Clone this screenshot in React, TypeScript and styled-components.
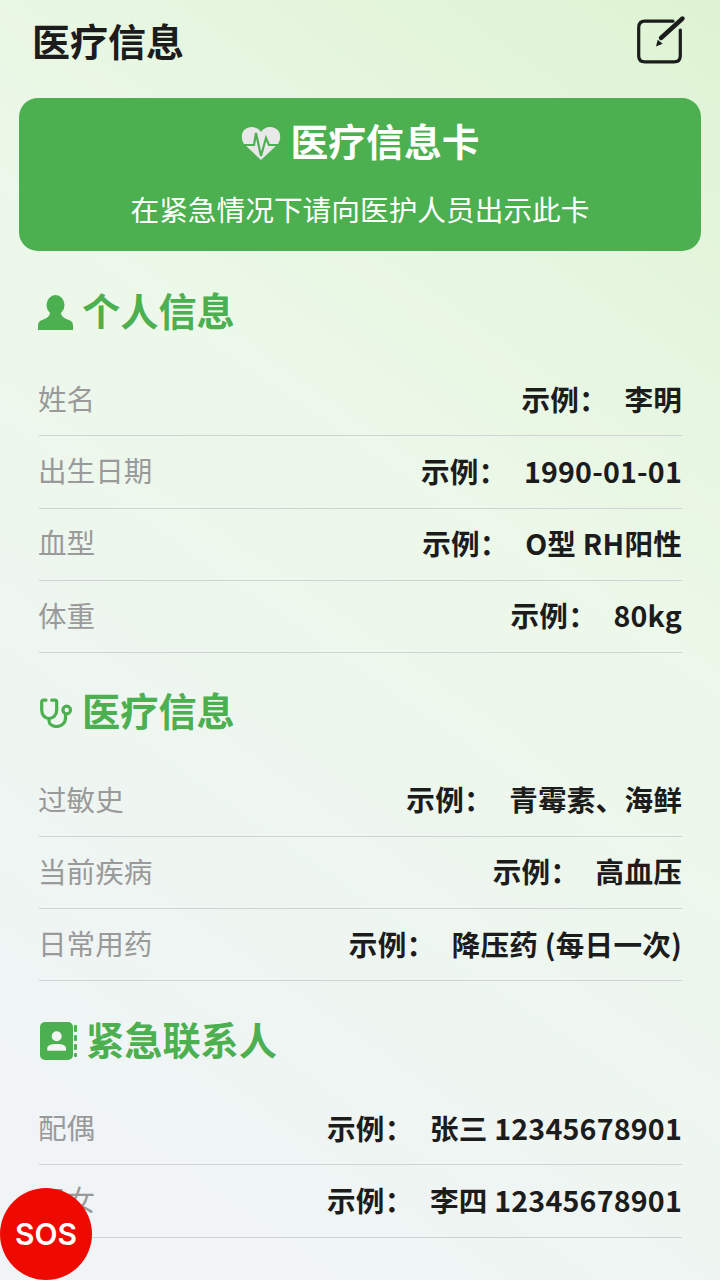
import styled, { createGlobalStyle } from "styled-components";

const GlobalStyle = createGlobalStyle`
  html, body {
    margin: 0;
    padding: 0;
  }
  body {
    font-family: "Inter", "Noto Sans CJK SC", sans-serif;
  }
`;

type Row = { label: string; value: string };

const personal: Row[] = [
  { label: "姓名", value: "李明" },
  { label: "出生日期", value: "1990-01-01" },
  { label: "血型", value: "O型 RH阳性" },
  { label: "体重", value: "80kg" },
];

const medical: Row[] = [
  { label: "过敏史", value: "青霉素、海鲜" },
  { label: "当前疾病", value: "高血压" },
  { label: "日常用药", value: "降压药 (每日一次)" },
];

const contacts: Row[] = [
  { label: "配偶", value: "张三 12345678901" },
  { label: "子女", value: "李四 12345678901" },
];

function EditIcon() {
  return (
    <EditSvg width="52" height="52" viewBox="0 0 52 52" fill="none">
      <path
        d="M39 6.200H11C7 6.200 4.700 8.500 4.700 12.500V41C4.700 45 7 46.800 11 46.800H40C44 46.800 46.300 45 46.300 41V15"
        stroke="#1c1c1c"
        strokeWidth="3.200"
        strokeLinecap="round"
      />
      <path d="M27 23L48.500 3.500" stroke="#1c1c1c" strokeWidth="4.400" strokeLinecap="round" />
      <path d="M22 31.500L23.700 24.800L28.700 28.800Z" fill="#1c1c1c" />
    </EditSvg>
  );
}

function HeartIcon() {
  return (
    <svg width="40" height="33" viewBox="0 0 40 33" fill="none">
      <path
        d="M20 33L3 17C-1 11 0 1 10 0C15 0 18 2 20 5C22 2 25 0 30 0C40 1 41 11 37 17Z"
        fill="#e8e8e8"
      />
      <path
        d="M0 18H13L15 6L20 29L25 11L28 18H40"
        stroke="#4caf50"
        strokeWidth="2.200"
      />
    </svg>
  );
}

function PersonIcon() {
  return (
    <PersonSvg width="35" height="35" viewBox="0 0 35 35" fill="#4caf50">
      <ellipse cx="17.500" cy="10" rx="9" ry="10" />
      <path d="M12 17C12 22 8 23.500 4 25C1 26 0 28 0 31V35H35V31C35 28 34 26 31 25C27 23.500 23 22 23 17Z" />
    </PersonSvg>
  );
}

function StethoscopeIcon() {
  return (
    <svg width="34" height="30" viewBox="0 0 34 30" fill="none" stroke="#4caf50" strokeWidth="3.200" strokeLinecap="round">
      <path d="M7 2.200H4.500C3.300 2.200 2.700 2.800 2.700 4V12C2.700 17 6 20.500 10 20.500C14 20.500 17.700 17 17.700 12V4C17.700 2.800 17.100 2.200 15.900 2.200H12.700" />
      <path d="M10 20.500V22.500C10 26 13 28.500 17.500 28.500C22.500 28.500 26.500 25 26.500 20V16.200" />
      <circle cx="27.700" cy="12" r="3.800" />
    </svg>
  );
}

function ContactsIcon() {
  return (
    <svg width="38" height="38" viewBox="0 0 38 38">
      <rect x="1" y="0" width="33" height="38" rx="5" fill="#4caf50" />
      <circle cx="17.700" cy="14.300" r="5" fill="#f1f6f2" />
      <path d="M8.300 28.700V26C8.300 23.500 12 22 17.700 22C23.400 22 27 23.500 27 26V28.700Z" fill="#f1f6f2" />
      <rect x="35" y="3" width="3" height="7" rx="1" fill="#4caf50" />
      <rect x="35" y="13" width="3" height="6" rx="1" fill="#4caf50" />
      <rect x="35" y="22" width="3" height="6" rx="1" fill="#4caf50" />
      <rect x="35" y="31" width="3" height="4" rx="1" fill="#4caf50" />
    </svg>
  );
}

function InfoRows({ rows }: { rows: Row[] }) {
  return (
    <RowList>
      {rows.map((row) => (
        <InfoRow key={row.label}>
          <Label>{row.label}</Label>
          <Value>
            <Prefix>示例：</Prefix>
            {row.value}
          </Value>
        </InfoRow>
      ))}
    </RowList>
  );
}

export default function App() {
  return (
    <Page>
      <GlobalStyle />
      <Header>
        <PageTitle>医疗信息</PageTitle>
        <EditIcon />
      </Header>

      <Banner>
        <BannerTitle>
          <HeartIcon />
          医疗信息卡
        </BannerTitle>
        <BannerText>在紧急情况下请向医护人员出示此卡</BannerText>
      </Banner>

      <Section>
        <SectionTitle>
          <PersonIcon />
          个人信息
        </SectionTitle>
        <InfoRows rows={personal} />
      </Section>

      <Section>
        <SectionTitle>
          <StethoscopeIcon />
          医疗信息
        </SectionTitle>
        <InfoRows rows={medical} />
      </Section>

      <Section>
        <SectionTitle>
          <ContactsIcon />
          紧急联系人
        </SectionTitle>
        <InfoRows rows={contacts} />
      </Section>

      <SosButton>SOS</SosButton>
    </Page>
  );
}

const Page = styled.div`
  position: relative;
  width: 720px;
  height: 1280px;
  overflow: hidden;
  background: linear-gradient(215deg, #def3d3 0%, #ecf8e9 38%, #f0f4f6 88%);
`;

const Header = styled.header`
  display: flex;
  align-items: center;
  justify-content: space-between;
  height: 84px;
  padding: 0 34px 0 32px;
`;

const PageTitle = styled.h1`
  margin: 0;
  font-size: 38px;
  font-weight: 700;
  line-height: 1;
  color: #1c1c1c;
`;

const EditSvg = styled.svg`
  margin-bottom: 3px;
`;

const Banner = styled.div`
  display: flex;
  flex-direction: column;
  align-items: center;
  height: 153px;
  margin: 14px 19px 30.5px;
  border-radius: 19px;
  background: #4caf50;
  color: #fff;
`;

const BannerTitle = styled.div`
  display: flex;
  align-items: center;
  gap: 10px;
  height: 90px;
  font-size: 37.8px;
  font-weight: 700;
  line-height: 1;
`;

const BannerText = styled.div`
  font-size: 28.7px;
  line-height: 46px;
`;

const Section = styled.section`
  padding: 0 38px 0 39px;
  margin-top: 29px;
`;

const SectionTitle = styled.h2`
  display: flex;
  align-items: center;
  gap: 9px;
  box-sizing: border-box;
  height: 60px;
  margin: 0;
  padding-top: 1px;
  font-size: 38.2px;
  font-weight: 700;
  line-height: 1;
  color: #4caf50;
`;

const PersonSvg = styled.svg`
  margin-left: -1px;
`;

const RowList = styled.div`
  padding-top: 22.8px;
`;

const InfoRow = styled.div`
  display: flex;
  align-items: center;
  justify-content: space-between;
  box-sizing: border-box;
  height: 72.2px;
  padding-top: 1px;
  border-bottom: 1px solid #cfd3d4;
`;

const Label = styled.span`
  margin-left: -1px;
  font-size: 28.6px;
  line-height: 1;
  color: #9a9a9a;
`;

const Value = styled.span`
  padding-bottom: 3px;
  font-family: "Noto Sans CJK SC", sans-serif;
  font-size: 28.6px;
  font-weight: 700;
  letter-spacing: 0.2px;
  line-height: 1;
  color: #1c1c1c;
`;

const Prefix = styled.span`
  margin-right: 16.5px;
`;

const SosButton = styled.button`
  position: absolute;
  left: 0;
  bottom: 0;
  width: 92px;
  height: 92px;
  padding: 0;
  border: none;
  border-radius: 50%;
  background: #ee0a00;
  color: #fff;
  font-family: "Inter", sans-serif;
  font-size: 30px;
  font-weight: 600;
`;
